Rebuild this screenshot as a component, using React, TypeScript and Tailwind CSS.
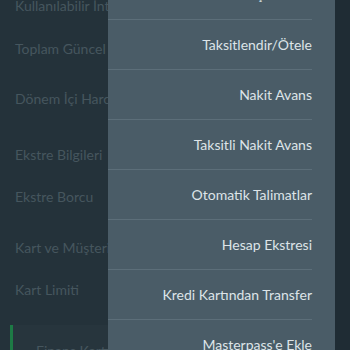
import React from "react";

const leftItems: { label: string; mt: string }[] = [
  { label: "Kullanılabilir İnternet Limiti", mt: "mt-[-4px]" },
  { label: "Toplam Güncel Borç", mt: "mt-[23px]" },
  { label: "Dönem İçi Harcamalar", mt: "mt-[30px]" },
  { label: "Ekstre Bilgileri", mt: "mt-[36px]" },
  { label: "Ekstre Borcu", mt: "mt-[22px]" },
  { label: "Kart ve Müşteri Bilgileri", mt: "mt-[31px]" },
  { label: "Kart Limiti", mt: "mt-[22px]" },
];

const menuItems = [
  "Borç Ödeme",
  "Taksitlendir/Ötele",
  "Nakit Avans",
  "Taksitli Nakit Avans",
  "Otomatik Talimatlar",
  "Hesap Ekstresi",
  "Kredi Kartından Transfer",
  "Masterpass'e Ekle",
];

export default function App() {
  return (
    <div
      className="relative w-[350px] h-[350px] overflow-hidden bg-[#24323a]"
      style={{ fontFamily: "Lato, 'Noto Sans', sans-serif" }}
    >
      <div className="flex flex-col pl-[15px] text-[14px] leading-5 text-[#46565e] whitespace-nowrap">
        {leftItems.map((it) => (
          <div key={it.label} className={it.mt}>
            {it.label}
          </div>
        ))}
        <div className="mt-[25px] ml-[-5px] h-[40px] border-l-[3px] border-[#1d7a45] bg-[#27353d] pl-[23px] pt-[16px]">
          Finans Kartı
        </div>
      </div>

      <div className="absolute top-0 right-0 w-[15px] h-full bg-[#1f2c34]" />

      <div className="absolute top-0 left-[108px] w-[227px] h-full bg-[#4a5c67]">
        <div className="mt-[-30px] flex flex-col">
          {menuItems.map((m) => (
            <div
              key={m}
              className="h-[50px] mr-[23px] flex items-center justify-end border-b border-[#5c6e79] text-[14px] text-[#dde4e8] whitespace-nowrap"
            >
              {m}
            </div>
          ))}
        </div>
      </div>
    </div>
  );
}
